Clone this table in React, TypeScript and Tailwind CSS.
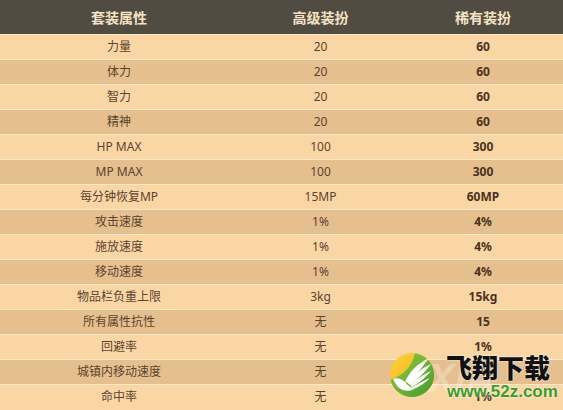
import React from "react";

type Row = { name: string; normal: string; rare: string };

const ROWS: Row[] = [
  { name: "力量", normal: "20", rare: "60" },
  { name: "体力", normal: "20", rare: "60" },
  { name: "智力", normal: "20", rare: "60" },
  { name: "精神", normal: "20", rare: "60" },
  { name: "HP MAX", normal: "100", rare: "300" },
  { name: "MP MAX", normal: "100", rare: "300" },
  { name: "每分钟恢复MP", normal: "15MP", rare: "60MP" },
  { name: "攻击速度", normal: "1%", rare: "4%" },
  { name: "施放速度", normal: "1%", rare: "4%" },
  { name: "移动速度", normal: "1%", rare: "4%" },
  { name: "物品栏负重上限", normal: "3kg", rare: "15kg" },
  { name: "所有属性抗性", normal: "无", rare: "15" },
  { name: "回避率", normal: "无", rare: "1%" },
  { name: "城镇内移动速度", normal: "无", rare: "1%" },
  { name: "命中率", normal: "无", rare: "1%" },
];

// site logo: yellow/green disc with a white winged bird
function Logo() {
  return (
    <svg width="46" height="46" viewBox="0 0 46 46">
      <defs>
        <linearGradient id="lg-y" x1="0" y1="0" x2="1" y2="1">
          <stop offset="0" stopColor="#fcd83a" />
          <stop offset="1" stopColor="#f29a1c" />
        </linearGradient>
        <linearGradient id="lg-g" x1="0" y1="0" x2="1" y2="1">
          <stop offset="0" stopColor="#9ccc3c" />
          <stop offset="1" stopColor="#3f9a2f" />
        </linearGradient>
        <clipPath id="lg-c">
          <circle cx="23" cy="23" r="22" />
        </clipPath>
      </defs>
      <g clipPath="url(#lg-c)">
        <rect width="46" height="46" fill="url(#lg-y)" />
        <path d="M26 0 C24 14 14 24 0 28 L0 46 L46 46 L46 0 Z" fill="url(#lg-g)" />
        {/* wing feathers */}
        <path d="M16 30 C20 20 28 12 40 6 C34 14 28 22 20 31 Z" fill="#fff" />
        <path d="M19 32 C24 24 31 17 42 12 C36 20 30 26 22 33 Z" fill="#fff" />
        <path d="M21 34 C27 28 33 23 42 19 C37 25 31 30 23 35 Z" fill="#fff" />
        <path d="M22 36 C28 32 34 29 41 26 C36 31 30 35 24 37 Z" fill="#fff" />
        {/* bird body */}
        <path d="M4 27 C8 25 13 27 16 30 C18 33 22 36 25 37 C20 40 13 39 9 35 C7 33 6 30 4 27 Z" fill="#fff" />
      </g>
    </svg>
  );
}

export default function App() {
  return (
    <div
      className="relative w-[563px] h-[410px] overflow-hidden bg-[#fbd6a5] text-[#5b4330]"
      style={{ fontFamily: '"Noto Sans", "Noto Sans CJK SC", sans-serif' }}
    >
      <div className="grid grid-cols-[238px_165px_160px] h-[34px] items-center bg-[#514c42] text-[14px] font-bold text-[#f6e3c3]">
        <div className="text-center">套装属性</div>
        <div className="text-center">高级装扮</div>
        <div className="text-center">稀有装扮</div>
      </div>
      {ROWS.map((r, i) => (
        <div
          key={r.name}
          className={
            "grid grid-cols-[238px_165px_160px] h-[25px] items-center border-t border-[#fdeacd] text-[12px] " +
            (i % 2 === 0 ? "bg-[#fbd6a5]" : "bg-[#e5c08e]")
          }
        >
          <div className="text-center">{r.name}</div>
          <div className="text-center">{r.normal}</div>
          <div className="text-center font-bold text-[#4a3221]">{r.rare}</div>
        </div>
      ))}

      {/* watermark */}
      <div
        className="absolute left-[428px] top-[358px] text-[40px] font-bold italic leading-none text-white/30"
        style={{ fontFamily: '"Liberation Sans", sans-serif' }}
      >
        XIA
      </div>
      <div className="absolute left-[389px] top-[352px]">
        <Logo />
      </div>
      <div
        className="absolute left-[446px] top-[354px] text-[26px] font-black leading-none text-[#111] [text-shadow:0_0_2px_#fff]"
        style={{ fontFamily: '"Noto Sans CJK SC", sans-serif' }}
      >
        飞翔下载
      </div>
      <div
        className="absolute left-[447px] top-[383px] text-[17px] font-bold leading-none text-[#3d9b2c] [text-shadow:0_0_2px_#fff]"
        style={{ fontFamily: '"Liberation Sans", Arial, sans-serif' }}
      >
        www.52z.com
      </div>
    </div>
  );
}
